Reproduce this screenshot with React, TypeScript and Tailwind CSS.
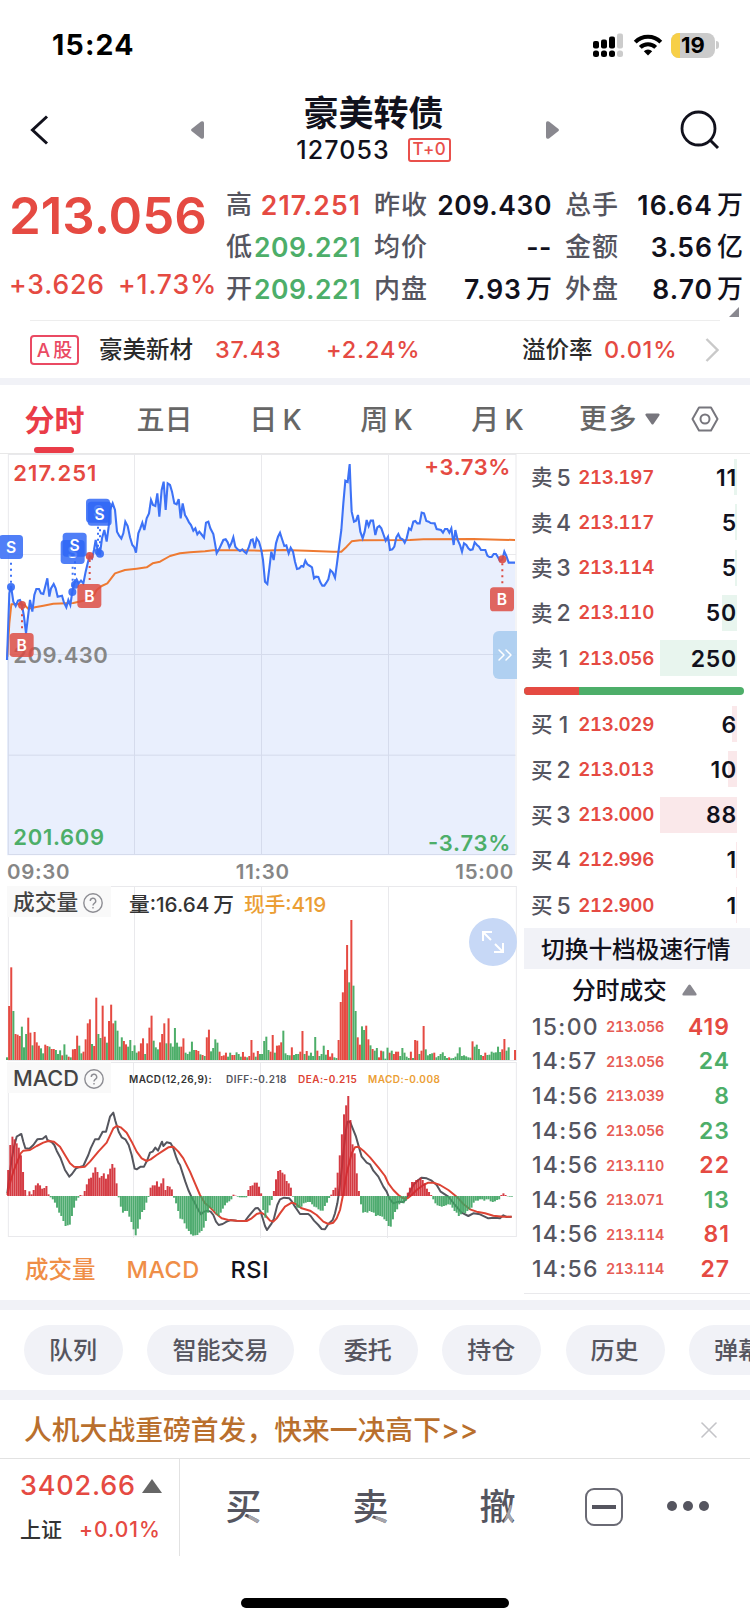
import { ChevronsRight, X } from 'lucide-react';
import { clsx } from 'clsx';

type Tone = 'up' | 'down' | 'plain';

const TONE: Record<Tone, string> = {
  up: 'text-[#e54a42]',
  down: 'text-[#4dae69]',
  plain: 'text-[#11111c]',
};

const QUOTES: { label: string; value: string; unit?: string; tone: Tone; tracking?: string }[][] = [
  [
    { label: '高', value: '217.251', tone: 'up', tracking: 'tracking-[1.1px]' },
    { label: '低', value: '209.221', tone: 'down' },
    { label: '开', value: '209.221', tone: 'down' },
  ],
  [
    { label: '昨收', value: '209.430', tone: 'plain' },
    { label: '均价', value: '--', tone: 'plain' },
    { label: '内盘', value: '7.93', unit: '万', tone: 'plain', tracking: 'tracking-[1px]' },
  ],
  [
    { label: '总手', value: '16.64', unit: '万', tone: 'plain', tracking: 'tracking-[1.2px]' },
    { label: '金额', value: '3.56', unit: '亿', tone: 'plain', tracking: 'tracking-[1px]' },
    { label: '外盘', value: '8.70', unit: '万', tone: 'plain', tracking: 'tracking-[1px]' },
  ],
];

const QUOTE_COL = ['w-[135px]', 'w-[178px] ml-[13px]', 'w-[178px] ml-[13px]'];

const ASKS = [
  { name: '卖', level: 5, price: '213.197', qty: 11, bar: 3 },
  { name: '卖', level: 4, price: '213.117', qty: 5, bar: 2 },
  { name: '卖', level: 3, price: '213.114', qty: 5, bar: 2 },
  { name: '卖', level: 2, price: '213.110', qty: 50, bar: 15 },
  { name: '卖', level: 1, price: '213.056', qty: 250, bar: 77 },
];

const BIDS = [
  { name: '买', level: 1, price: '213.029', qty: 6, bar: 5 },
  { name: '买', level: 2, price: '213.013', qty: 10, bar: 9 },
  { name: '买', level: 3, price: '213.000', qty: 88, bar: 77 },
  { name: '买', level: 4, price: '212.996', qty: 1, bar: 1 },
  { name: '买', level: 5, price: '212.900', qty: 1, bar: 1 },
];

const TRADES: { time: string; price: string; qty: number; tone: Tone }[] = [
  { time: '15:00', price: '213.056', qty: 419, tone: 'up' },
  { time: '14:57', price: '213.056', qty: 24, tone: 'down' },
  { time: '14:56', price: '213.039', qty: 8, tone: 'down' },
  { time: '14:56', price: '213.056', qty: 23, tone: 'down' },
  { time: '14:56', price: '213.110', qty: 22, tone: 'up' },
  { time: '14:56', price: '213.071', qty: 13, tone: 'down' },
  { time: '14:56', price: '213.114', qty: 81, tone: 'up' },
  { time: '14:56', price: '213.114', qty: 27, tone: 'up' },
];

const PILLS = ['队列', '智能交易', '委托', '持仓', '历史', '弹幕'];

// All chart data is kept at 3x device pixels
const PRICE =
  '21,630 28,430 33,408 40,455 47,468 54,452 60,450 66,465 72,500 78,550 84,500 90,450 97,485 103,435 109,417 117,417 123,430 130,432 142,385 148,440 153,415 161,402 167,415 173,440 186,437 192,458 199,472 205,450 211,465 217,425 223,400 230,388 236,400 243,392 250,400 257,365 263,340 269,318 276,325 282,300 287,270 293,300 300,310 306,265 313,240 320,275 326,230 330,180 338,160 345,180 351,245 358,258 364,266 370,250 376,215 383,228 390,262 397,285 403,292 408,308 415,250 421,235 427,218 433,240 440,205 447,190 453,150 459,165 466,168 472,130 478,200 485,120 491,95 497,180 503,100 510,105 516,125 523,160 530,163 536,147 542,205 548,160 555,195 560,203 567,217 573,225 580,242 586,235 592,253 598,245 606,255 612,263 618,218 625,215 631,235 640,252 645,280 650,310 657,298 663,285 670,270 677,268 683,277 688,292 694,280 700,262 706,290 713,298 720,303 727,298 733,305 739,310 747,290 753,270 758,268 764,295 770,265 777,275 784,300 789,330 795,395 802,402 808,355 814,305 821,330 828,280 834,260 840,248 847,270 853,288 859,286 866,310 872,293 879,305 885,335 891,357 898,355 904,348 910,350 916,332 922,343 930,348 936,352 942,385 948,380 955,381 961,397 967,407 973,407 979,398 985,388 991,360 998,367 1005,383 1011,340 1018,285 1024,240 1030,160 1036,92 1043,96 1049,42 1052,120 1055,185 1062,215 1068,212 1074,195 1081,245 1088,265 1094,245 1100,210 1106,228 1112,212 1119,212 1126,255 1132,232 1138,228 1144,235 1151,255 1157,272 1164,260 1170,300 1177,298 1183,290 1189,262 1195,252 1201,265 1208,268 1214,278 1220,265 1227,235 1233,240 1240,215 1246,213 1252,220 1259,220 1265,188 1272,190 1279,213 1286,215 1292,219 1304,220 1310,237 1323,240 1329,248 1335,237 1342,237 1348,248 1354,235 1361,285 1366,240 1373,270 1380,285 1386,305 1392,280 1399,285 1405,295 1411,300 1418,298 1424,277 1431,285 1437,290 1443,300 1456,300 1462,317 1468,321 1475,321 1481,312 1488,312 1494,322 1500,333 1507,328 1513,305 1519,318 1526,338 1545,338';

const AVERAGE =
  '22,620 28,520 34,463 60,462 75,466 84,476 105,472 130,467 160,461 220,459 260,450 282,435 290,420 305,408 322,400 345,370 375,360 410,356 440,352 458,340 480,335 510,318 540,310 570,307 615,304 640,301 700,301 784,302 850,300 920,302 1000,305 1024,305 1040,290 1055,274 1080,271 1230,270 1270,268 1420,267 1500,269 1545,270';

// Positive is an up minute, negative a down minute
const VOLUME = [
  -8, 162, 278, -147, 78, 76, 72, -100, -38, -78, 127, 82, -44, 84, 53, 43, -35, -20, 46, 42,
  -40, 33, 33, -30, -18, -29, 14, -47, -16, 10, -8, 32, 33, 73, -43, -20, 25, 62, 110, 122,
  -48, 42, 187, -78, -66, 163, 70, -52, 117, 166, 110, -118, -88, -40, -68, 57, 47, -40, -60, -27,
  -44, -22, 26, 50, 65, -18, 50, 97, 133, -58, -38, -32, 53, 78, 110, -50, 125, -50, -40, -96,
  -52, -40, 40, 65, -22, -18, -25, -55, -30, 30, 27, -17, 15, -12, 68, 91, -26, -36, -62, -52,
  25, 12, 14, 22, -10, -22, 15, 15, -23, -18, -10, 24, 10, -8, 12, 60, 22, -10, 27, -18,
  -18, -57, -70, -30, 25, 75, -22, 43, 44, 53, -88, -20, -15, -14, 38, -15, -18, -18, 25, 87,
  -18, 27, -13, -22, -12, -69, 28, -12, -18, -43, -16, 30, 10, 20, -8, -6, 60, 174, 203, 271,
  345, -233, 420, -223, -147, 68, 46, -101, -90, 103, 62, -44, 33, -28, -36, 8, 28, -26, -4, -37,
  22, -28, 18, 25, 25, -12, -36, -22, -10, -6, 25, -6, 60, 58, -18, 28, 102, -32, -14, -18,
  -20, 22, -8, -12, -18, -23, -12, -6, 8, -5, -6, -10, -20, -38, -12, -14, -11, -8, -7, 56,
  -40, -46, -33, -15, 12, 22, -15, -16, -25, -22, -23, -40, -24, 32, 63, -28, -38, 0, 0, 30,
];

const HISTOGRAM = [
  78, 153, 178, 170, 158, 145, 122, 72, 18, 1, 14, 5, 18, 32, 38, 32, 22, 24, 30, 5,
  -4, -10, -20, -35, -50, -60, -75, -90, -88, -86, -60, -35, -14, -5, 3, 1, 15, 35, 52, 55,
  70, 86, 72, 55, 60, 68, 52, 65, 82, 96, 85, 38, -4, -32, -50, -45, -45, -62, -78, -100,
  -118, -98, -70, -48, -42, -20, -3, 25, 32, 32, 44, 28, 38, 53, 18, 30, 28, 20, -5, -22,
  -45, -68, -70, -82, -98, -105, -115, -119, -118, -117, -110, -105, -95, -75, -50, -35, -38, -45, -55, -60,
  -50, -38, -28, -20, -16, -10, 4, 1, -2, -4, -4, -4, -4, 18, 30, 32, 40, 40, 28, 8,
  -42, -65, -50, -28, -12, 15, 50, 75, 78, 70, 65, 45, 38, 25, -2, -20, -35, -36, -32, -22,
  -20, -18, -18, -25, -32, -34, -40, -44, -44, -30, -20, -6, 4, 18, 25, 70, 122, 185, 245, 272,
  300, 228, 155, 128, 68, 15, -25, -50, -48, -50, -45, -48, -50, -60, -58, -60, -62, -70, -75, -90,
  -92, -70, -48, -40, -25, -20, -22, -15, 10, 25, 42, 42, 48, 50, 55, 48, 38, 22, 12, 3,
  -10, -22, -28, -30, -32, -30, -28, -25, -26, -35, -45, -50, -60, -55, -50, -52, -45, -40, -35, -20,
  -14, -14, -10, -10, -14, -10, -10, -16, -18, -16, -12, -10, 3, 8, 3, -1, -2, -2,
];

const DIFF =
  '22,940 28,890 34,845 42,800 50,770 58,765 64,762 70,785 76,805 88,806 100,795 112,778 128,776 138,768 142,780 155,786 163,795 170,812 182,835 195,870 208,890 216,882 228,865 242,860 250,858 258,840 265,825 272,805 285,778 296,778 308,755 318,755 330,710 340,698 346,722 356,755 365,772 376,778 386,795 395,825 404,866 410,868 422,860 432,860 442,840 450,818 458,815 466,803 474,812 480,798 486,785 490,798 500,787 512,790 520,805 528,830 535,848 540,855 548,880 556,905 565,930 574,950 585,970 595,990 603,1003 612,995 622,992 632,995 640,1005 648,1025 656,1035 668,1032 680,1025 692,1020 710,1022 735,1023 745,1010 755,998 766,985 774,984 782,995 788,1015 795,1038 801,1050 808,1040 815,1030 822,1015 832,975 840,958 852,953 868,955 876,965 885,980 900,1002 925,1002 932,1008 942,1022 955,1035 965,1047 975,1048 985,1032 998,1020 1005,1000 1012,970 1018,930 1025,870 1032,800 1038,750 1042,725 1050,725 1058,745 1068,770 1075,795 1085,830 1100,848 1110,853 1120,872 1135,890 1150,920 1160,935 1168,955 1180,970 1195,965 1210,966 1220,955 1230,935 1240,915 1255,900 1265,893 1280,895 1295,902 1310,915 1322,935 1345,950 1365,975 1385,998 1405,1008 1420,1000 1440,1003 1465,1015 1485,1013 1500,1015 1510,1006 1520,1011 1535,1010';

const DEA =
  '22,945 30,910 40,875 52,845 62,820 70,812 90,810 110,798 130,788 145,783 162,785 180,800 198,830 210,850 222,860 240,862 255,860 270,845 295,815 320,788 340,745 350,738 362,742 380,758 395,785 410,815 425,835 440,843 452,838 470,825 490,812 505,802 520,800 535,815 550,835 570,875 585,910 600,945 615,970 630,982 645,998 665,1015 685,1020 710,1022 740,1023 755,1015 770,1002 784,998 795,1005 810,1022 820,1025 830,1015 840,1000 855,980 875,968 885,970 905,985 930,992 950,1005 970,1025 985,1032 1000,1028 1010,1015 1020,990 1030,940 1040,880 1055,820 1065,802 1075,800 1090,812 1110,832 1135,862 1155,888 1165,910 1180,930 1195,945 1210,955 1222,955 1235,945 1250,930 1270,915 1285,908 1300,908 1320,915 1345,930 1370,950 1390,972 1410,988 1430,995 1455,1000 1480,1007 1510,1010 1535,1010';

const STEP = 6.377;

function StatusBar() {
  return (
    <div className="flex h-[88px] items-start justify-between pt-[31px] pr-[31px] pl-[52px]">
      <span className="text-[28.5px] leading-[28px] font-bold tracking-[1.2px] text-black">15:24</span>
      <div className="flex items-center pt-[1px]">
        <svg width="31" height="26" viewBox="0 0 31 26">
          <g fill="#000">
            <rect x="0" y="9" width="6" height="7.5" rx="2" />
            <rect x="8" y="7.5" width="6" height="9" rx="2" />
            <rect x="16" y="4.5" width="6" height="12" rx="2" />
            <rect x="0" y="18.500" width="6" height="6.500" rx="2.500" />
            <rect x="8" y="18.500" width="6" height="6.500" rx="2.500" />
            <rect x="16" y="18.500" width="6" height="6.500" rx="2.500" />
          </g>
          <g fill="#ccc">
            <rect x="24" y="1.500" width="6" height="15" rx="2" />
            <rect x="24" y="18.500" width="6" height="6.500" rx="2.500" />
          </g>
        </svg>
        <svg className="ml-[9px]" width="30" height="22" viewBox="0 0 30 22" fill="none" stroke="#000" strokeWidth="4">
          <path d="M2.200 8.200a18 18 0 0 1 25.600 0" />
          <path d="M7.300 13.400a11 11 0 0 1 15.400 0" />
          <path d="M15 21.500l-4.200-4.300a6 6 0 0 1 8.400 0z" fill="#000" stroke="none" />
        </svg>
        <div className="relative ml-[8px] flex h-[25px] w-[44px] items-center justify-center rounded-[8px] bg-[#cbcbcb]">
          <div className="absolute inset-y-0 left-0 w-[9px] rounded-l-[8px] bg-[#f7cf47]" />
          <span className="relative text-[22px] leading-[25px] font-bold text-black">19</span>
        </div>
        <div className="ml-[1px] h-[8px] w-[3px] rounded-r-full bg-[#cbcbcb]" />
      </div>
    </div>
  );
}

function Header() {
  return (
    <div className="flex h-[92px] items-start pr-[30px] pl-[30px]">
      <svg className="mt-[27px]" width="20" height="30" viewBox="0 0 20 30" fill="none" stroke="#11111c" strokeWidth="3">
        <path d="M17 1.500L2.500 15L17 28.500" />
      </svg>
      <svg className="mt-[33px] ml-[141px]" width="14" height="18" viewBox="0 0 14 18">
        <path d="M0.500 8Q-0.300 9 0.500 10L10 17.500Q13 18.500 13 16V2Q13 -0.500 10 0.500Z" fill="#89888f" />
      </svg>
      <div className="flex w-[340px] flex-col items-center pt-[7px] pr-[3px]">
        <h1 className="text-[35px] leading-[36px] font-bold text-[#11111c]">豪美转债</h1>
        <div className="mt-[6px] flex items-center gap-[18px]">
          <span className="text-[25px] leading-[27px] font-medium tracking-[1.1px] text-[#11111c]">127053</span>
          <span className="-mt-[2px] flex h-[24px] w-[43px] items-center justify-center rounded-[3px] border-2 border-[#e9504b] text-[17px] font-medium tracking-[0.4px] text-[#e9504b]">
            T+0
          </span>
        </div>
      </div>
      <svg className="mt-[33px]" width="14" height="18" viewBox="0 0 14 18">
        <path d="M13.500 8Q14.300 9 13.500 10L4 17.500Q1 18.500 1 16V2Q1 -0.500 4 0.500Z" fill="#89888f" />
      </svg>
      <svg className="mt-[22px] ml-auto" width="40" height="40" viewBox="0 0 40 40" fill="none" stroke="#11111c" strokeWidth="2.800">
        <circle cx="18.500" cy="18.500" r="16.500" />
        <path d="M30 30L38 38" strokeWidth="3" />
      </svg>
    </div>
  );
}

function QuotePanel() {
  return (
    <div className="relative flex h-[140px] pl-[9px]">
      <div className="w-[217px] shrink-0 whitespace-nowrap text-[#e54a42]">
        <div className="pt-[11px] text-[51px] leading-[50px] font-semibold">213.056</div>
        <div className="mt-[29px] flex gap-[13px] text-[26.5px] leading-[28px] tracking-[0.900px]">
          <span>+3.626</span>
          <span>+1.73%</span>
        </div>
      </div>
      {QUOTES.map((col, i) => (
        <div key={i} className={clsx('pt-[4px]', QUOTE_COL[i])}>
          {col.map((q) => (
            <div key={q.label} className="flex h-[42px] items-center justify-between text-[26px] leading-none whitespace-nowrap">
              <span className="tracking-[1px] text-[#55555f]">{q.label}</span>
              <span className={clsx('flex items-center', TONE[q.tone])}>
                <span className={clsx('text-[26.5px] font-semibold', q.tracking ?? 'tracking-[0.600px]')}>{q.value}</span>
                {q.unit && <span className="ml-[4px]">{q.unit}</span>}
              </span>
            </div>
          ))}
        </div>
      ))}
      <svg className="absolute right-[11px] bottom-[3px]" width="10" height="10" viewBox="0 0 10 10">
        <path d="M10 0V10H0Z" fill="#89888f" />
      </svg>
    </div>
  );
}

function UnderlyingRow() {
  return (
    <div className="mx-[30px] flex h-[58px] items-center border-t border-[#ededed] pt-[1px] text-[23.5px] leading-none whitespace-nowrap">
      <span className="flex h-[30px] w-[49px] shrink-0 items-center justify-center gap-[3px] rounded-[4px] border-2 border-[#ea4a63] text-[19px] text-[#ea4a63]">
        <b className="font-medium">A</b>股
      </span>
      <span className="ml-[20px] w-[116px] shrink-0 text-[#2a2a2a]">豪美新材</span>
      <span className="w-[111px] shrink-0 tracking-[0.800px] text-[#e54a42]">37.43</span>
      <span className="w-[196px] shrink-0 tracking-[0.800px] text-[#e54a42]">+2.24%</span>
      <span className="w-[82px] shrink-0 text-[#2a2a2a]">溢价率</span>
      <span className="w-[101px] shrink-0 tracking-[0.800px] text-[#e54a42]">0.01%</span>
      <svg className="shrink-0" width="14" height="24" viewBox="0 0 14 24" fill="none" stroke="#c9c9c9" strokeWidth="2.400">
        <path d="M1.500 1L12.500 12L1.500 23" />
      </svg>
    </div>
  );
}

function PeriodTabs() {
  return (
    <div className="flex h-[69px] border-b border-[#e8e8e8] text-[28px] leading-[70px] whitespace-nowrap text-[#666]">
      <div className="relative w-[109px] text-center text-[30px] font-bold text-[#ea3c48]">
        分时
        <div className="absolute bottom-0 left-[34px] h-[6px] w-[40px] rounded-full bg-[#ea3c48]" />
      </div>
      <div className="w-[111px] text-center">五日</div>
      {['日', '周', '月'].map((d) => (
        <div key={d} className="flex w-[111px] justify-center gap-[5px]">
          {d}
          <span>K</span>
        </div>
      ))}
      <div className="flex items-center pl-[26px]">
        <span className="tracking-[1.5px]">更多</span>
        <svg className="ml-[7px]" width="15" height="12" viewBox="0 0 15 12">
          <path d="M1.500 0.500H13.500Q15.500 1 14 3L8.500 11Q7.500 12 6.500 11L1 3Q-0.500 1 1.500 0.500Z" fill="#77767d" />
        </svg>
        <svg className="ml-[31px]" width="28" height="26" viewBox="0 0 28 26" fill="none" stroke="#77767d" strokeWidth="2">
          <path d="M8 1.500H20L26.500 13L20 24.500H8L1.500 13Z" strokeLinejoin="round" />
          <circle cx="14" cy="13" r="4.500" />
        </svg>
      </div>
    </div>
  );
}

function Marker({ x, y, kind }: { x: number; y: number; kind: 'S' | 'B' }) {
  return (
    <g>
      <rect x={x - 36} y={y - 36} width="72" height="72" rx="11" fill={kind === 'S' ? '#2e66f5' : '#dc4b42'} fillOpacity="0.84" />
      <text x={x} y={y + 18} textAnchor="middle" fontSize="47" fontWeight="600" fill="#fff">
        {kind}
      </text>
    </g>
  );
}

function PriceChart() {
  return (
    <div className="relative h-[402px]">
      <svg width="524" height="402" viewBox="0 12 1572 1206" className="block">
        <g stroke="#e9e9ec" strokeWidth="3" fill="none">
          <rect x="25" y="13.500" width="1523" height="1200" />
          <path d="M403.500 12V1213M784.500 12V1213M1165.500 12V1213M25 313.500H1548M25 613.500H1548M25 915.500H1548" />
        </g>
        <polygon points={`21,1216 ${PRICE} 1545,1216`} fill="#2e66e8" fillOpacity="0.105" />
        <polyline points={AVERAGE} fill="none" stroke="#ee7a32" strokeWidth="6" strokeLinejoin="round" />
        <polyline points={PRICE} fill="none" stroke="#3d72f6" strokeWidth="6.300" strokeLinejoin="miter" />
        <g stroke="#3d72f6" strokeWidth="6" strokeDasharray="6 12">
          <path d="M33 338V400M218 350V415M225 334V400M294 230V300M300 238V300" />
        </g>
        <path d="M66 475V540M269 330V392M1507 340V405" stroke="#dc4b42" strokeWidth="6" strokeDasharray="6 12" />
        <g fill="#3269f5" fillOpacity="0.9">
          <circle cx="33" cy="411" r="12" />
          <circle cx="217" cy="426" r="12" />
          <circle cx="225" cy="404" r="12" />
          <circle cx="294" cy="305" r="10" />
          <circle cx="300" cy="311" r="12" />
        </g>
        <g fill="#dc4b42" fillOpacity="0.9">
          <circle cx="66" cy="465" r="12" />
          <circle cx="269" cy="318" r="12" />
          <circle cx="1507" cy="328" r="12" />
        </g>
        <g fontSize="66" fontWeight="600">
          <text x="40" y="94" fill="#e54a42" textLength="249">217.251</text>
          <text x="1531" y="75" fill="#e54a42" textAnchor="end" textLength="258">+3.73%</text>
          <text x="40" y="639" fill="#868686" textLength="283">209.430</text>
          <text x="40" y="1185" fill="#4dae69" textLength="272">201.609</text>
          <text x="1531" y="1204" fill="#4dae69" textAnchor="end" textLength="247">-3.73%</text>
        </g>
        <Marker x={33} y={291} kind="S" />
        <Marker x={218} y={306} kind="S" />
        <Marker x={224} y={284} kind="S" />
        <Marker x={294} y={182} kind="S" />
        <Marker x={299} y={191} kind="S" />
        <Marker x={65} y={585} kind="B" />
        <Marker x={268} y={438} kind="B" />
        <Marker x={1506} y={448} kind="B" />
      </svg>
      <div className="absolute top-[177px] left-[493px] flex h-[48px] w-[24px] items-center justify-center rounded-l-[6px] bg-[#a6caef]/85">
        <ChevronsRight className="h-[24px] w-[24px] shrink-0 text-white" strokeWidth={1.5} />
      </div>
    </div>
  );
}

function PanelTitle({ label }: { label: string }) {
  return (
    <div className="absolute top-0 left-[7px] flex h-[31px] w-[104px] items-center bg-[#f9f9f9] pt-[2px] pl-[6px] text-[21.7px] leading-none whitespace-nowrap text-[#444]">
      {label}
      <svg className="ml-[5px] shrink-0" width="20" height="20" viewBox="0 0 20 20" fill="none" stroke="#8d8d93" strokeWidth="1.400">
        <circle cx="10" cy="10" r="9.200" />
        <path d="M7.300 8a2.700 2.700 0 1 1 4 2.300Q10 11 10 12.400M10 14v1.600" />
      </svg>
    </div>
  );
}

function VolumeChart() {
  return (
    <div className="relative h-[176px]">
      <svg width="524" height="176" viewBox="0 18 1572 528" className="block">
        <g stroke="#e9e9ec" strokeWidth="3" fill="none">
          <rect x="25" y="19.500" width="1524" height="522" />
          <path d="M403.500 20V540M784.500 20V540M1165.500 20V540" />
        </g>
        {VOLUME.map((v, i) => (
          <rect
            key={i}
            x={18 + i * STEP}
            y={540 - Math.abs(v)}
            width="6"
            height={Math.abs(v)}
            fill={v > 0 ? '#e54a42' : '#4dae69'}
          />
        ))}
      </svg>
      <PanelTitle label="成交量" />
      <div className="absolute top-[9px] left-[129px] flex gap-[10px] text-[20.700px] leading-none whitespace-nowrap">
        <span className="text-[#333]">
          量:16.64<span className="ml-[4px]">万</span>
        </span>
        <span className="text-[#eb9e34]">现手:419</span>
      </div>
      <div className="absolute top-[32px] left-[469px] flex h-[48px] w-[48px] items-center justify-center rounded-full bg-[#c7d8f6]">
        <svg width="22" height="22" viewBox="0 0 22 22" fill="none" stroke="#fff" strokeWidth="2">
          <path d="M1 10V1H10M1 1L9 9M21 12V21H12M21 21L13 13" />
        </svg>
      </div>
    </div>
  );
}

function MacdChart() {
  return (
    <div className="relative h-[176px]">
      <svg width="524" height="176" viewBox="0 546 1572 528" className="block">
        <g stroke="#e9e9ec" strokeWidth="3" fill="none">
          <rect x="25" y="547.500" width="1524" height="522" />
          <path d="M400.500 546V1074M781.500 546V1074M1162.500 546V1074" />
        </g>
        <polyline points={DIFF} fill="none" stroke="#55565e" strokeWidth="6" strokeLinejoin="round" />
        <polyline points={DEA} fill="none" stroke="#dd4334" strokeWidth="6" strokeLinejoin="round" />
        {HISTOGRAM.map((v, i) => (
          <rect
            key={i}
            x={21.5 + i * STEP}
            y={v > 0 ? 948 - v : 948}
            width="6"
            height={Math.abs(v)}
            fill={v > 0 ? '#d02a33' : '#3fa463'}
            fillOpacity="0.92"
          />
        ))}
      </svg>
      <PanelTitle label="MACD" />
      <div className="absolute top-[11px] left-[129px] flex text-[10px] leading-[12px] font-semibold tracking-[0.450px] whitespace-nowrap">
        <span className="w-[97px] text-[#333]">MACD(12,26,9):</span>
        <span className="w-[72px] text-[#55565e]">DIFF:-0.218</span>
        <span className="w-[70px] text-[#dd4334]">DEA:-0.215</span>
        <span className="text-[#eb9e34]">MACD:-0.008</span>
      </div>
    </div>
  );
}

function BookRow({ row, side }: { row: (typeof ASKS)[number]; side: 'ask' | 'bid' }) {
  return (
    <div className="flex h-[36px] items-center leading-none whitespace-nowrap">
      <span className="mt-[2px] w-[21px] text-[21.5px] text-[#55555f]">{row.name}</span>
      <span className="mt-[2px] w-[23px] text-center text-[23px] text-[#55555f]">{row.level}</span>
      <span className="mt-[2px] w-[79px] text-right text-[18.700px] font-semibold tracking-[-0.250px] text-[#e54a42] tabular-nums">
        {row.price}
      </span>
      <div className="relative ml-auto flex h-[36px] w-[77px] items-center justify-end">
        <div
          className={clsx('absolute inset-y-0 right-0', side === 'ask' ? 'bg-[#e8f5ee]' : 'bg-[#fae8ea]')}
          style={{ width: row.bar }}
        />
        <span className="relative mt-[2px] text-[23px] font-semibold tracking-[0.800px] text-[#11111c]">{row.qty}</span>
      </div>
    </div>
  );
}

function OrderBook() {
  return (
    <div className="w-[226px] shrink-0">
      <div className="flex flex-col gap-[9.250px] pt-[5px] pr-[13px] pl-[7px]">
        {ASKS.map((row) => (
          <BookRow key={row.level} row={row} side="ask" />
        ))}
      </div>
      <div className="mt-[11px] flex h-[8px] w-[220px] overflow-hidden rounded-full bg-[#4dae69]">
        <div className="w-[55px] bg-[#e54a42]" />
      </div>
      <div className="mt-[11px] flex flex-col gap-[9.250px] pr-[13px] pl-[7px]">
        {BIDS.map((row) => (
          <BookRow key={row.level} row={row} side="bid" />
        ))}
      </div>
      <div className="mt-[5px] flex h-[41px] items-center bg-[#f1f2f7] pt-[2px] pl-[17px] text-[23.7px] leading-none whitespace-nowrap text-[#11111c]">
        切换十档极速行情
      </div>
      <div className="flex h-[41px] items-center pt-[2px] pl-[48px] text-[23.7px] leading-none text-[#11111c]">
        分时成交
        <svg className="mb-[2px] ml-[15px]" width="15" height="12" viewBox="0 0 15 12">
          <path d="M1.500 11.500H13.500Q15.500 11 14 9L8.500 1Q7.500 0 6.500 1L1 9Q-0.500 11 1.500 11.500Z" fill="#89888f" />
        </svg>
      </div>
      <div className="border-b border-[#e9e9ec] pb-[6px]">
        {TRADES.map((t, i) => (
          <div key={i} className="flex h-[34.600px] items-center pr-[20px] pl-[8px] leading-none">
            <span className="w-[68px] text-[23px] tracking-[1.300px] text-[#55555f]">{t.time}</span>
            <span className="w-[64px] text-right text-[14.300px] font-semibold tracking-[-0.200px] text-[#e54a42] tabular-nums opacity-90">
              {t.price}
            </span>
            <span className={clsx('ml-auto text-[23px] font-semibold tracking-[1px]', TONE[t.tone])}>{t.qty}</span>
          </div>
        ))}
      </div>
    </div>
  );
}

function ActionGlyph({ char, clip }: { char: string; clip: string }) {
  return (
    <div className="relative w-[127px] text-center text-[36px] leading-[36px] text-[#55555f]">
      {char}
      <span aria-hidden className={clsx('absolute inset-0 text-[#a5a5ab]', clip)}>
        {char}
      </span>
    </div>
  );
}

function BottomBar() {
  return (
    <div className="flex h-[98px] border-t border-[#e2e2e2] whitespace-nowrap">
      <div className="w-[180px] shrink-0 border-r border-[#e2e2e2] pl-[20px] leading-none">
        <div className="flex items-center gap-[6px] pt-[13px] text-[27px] leading-[27px] tracking-[0.800px] text-[#e54a42]">
          3402.66
          <svg width="20" height="14" viewBox="0 0 20 14">
            <path d="M10 0L20 14H0Z" fill="#666" />
          </svg>
        </div>
        <div className="mt-[20px] flex items-center text-[21px] leading-[22px]">
          <span className="w-[59px] text-[#333]">上证</span>
          <span className="tracking-[1px] text-[#e54a42]">+0.01%</span>
        </div>
      </div>
      <div className="flex flex-1 items-center pb-[1px]">
        <ActionGlyph char="买" clip="[clip-path:polygon(54%_66%,70%_66%,70%_110%,54%_110%)]" />
        <ActionGlyph char="卖" clip="[clip-path:polygon(54%_76%,70%_76%,70%_110%,54%_110%)]" />
        <ActionGlyph char="撤" clip="[clip-path:polygon(60%_45%,66%_45%,60%_110%,53%_110%)]" />
        <div className="ml-[24px] flex h-[38px] w-[38px] items-center justify-center rounded-[9px] border-2 border-[#6a6a74]">
          <div className="h-[4px] w-[24px] bg-[#55555f]" />
        </div>
        <div className="mb-[2px] ml-[44px] flex gap-[6px]">
          <i className="h-[10px] w-[10px] rounded-full bg-[#55555f]" />
          <i className="h-[10px] w-[10px] rounded-full bg-[#55555f]" />
          <i className="h-[10px] w-[10px] rounded-full bg-[#55555f]" />
        </div>
      </div>
    </div>
  );
}

export default function App() {
  return (
    <div className="h-[1624px] w-[750px] overflow-hidden bg-white font-['Inter','Noto_Sans_CJK_SC',sans-serif] font-medium">
      <StatusBar />
      <Header />
      <QuotePanel />
      <UnderlyingRow />
      <div className="h-[7px] bg-[#f1f2f7]" />
      <PeriodTabs />

      <div className="flex h-[846px]">
        <div className="w-[524px] shrink-0">
          <PriceChart />
          <div className="flex h-[30px] items-center justify-between pt-[3px] pr-[10px] pl-[7px] text-[20.500px] leading-none font-semibold tracking-[0.700px] text-[#868686]">
            <span>09:30</span>
            <span>11:30</span>
            <span>15:00</span>
          </div>
          <VolumeChart />
          <MacdChart />
          <div className="flex h-[62px] items-center gap-[31px] pt-[1px] pl-[25px] text-[23.5px] leading-none text-[#ef8e47]">
            <span>成交量</span>
            <span className="tracking-[0.400px]">MACD</span>
            <span className="tracking-[0.600px] text-[#11111c]">RSI</span>
          </div>
        </div>
        <OrderBook />
      </div>

      <div className="h-[10px] bg-[#f1f2f7]" />
      <div className="flex h-[80px] items-center gap-[24.400px] pl-[24px]">
        {PILLS.map((p) => (
          <div
            key={p}
            className="flex h-[50px] shrink-0 items-center rounded-full bg-[#f1f2f7] pt-[2px] pr-[26px] pl-[25px] text-[24px] leading-none text-[#55555f]"
          >
            {p}
          </div>
        ))}
      </div>
      <div className="h-[10px] bg-[#f1f2f7]" />
      <div className="flex h-[58px] items-center justify-between pr-[27px] pl-[24px] text-[27.8px] leading-none text-[#b96f2d]">
        <span className="pt-[4px]">人机大战重磅首发，快来一决高下&gt;&gt;</span>
        <X className="mt-[2px] h-[28px] w-[28px] text-[#c4c4c8]" strokeWidth={1.4} />
      </div>
      <BottomBar />
      <div className="mx-auto mt-[42px] h-[10px] w-[268px] rounded-full bg-black" />
    </div>
  );
}
